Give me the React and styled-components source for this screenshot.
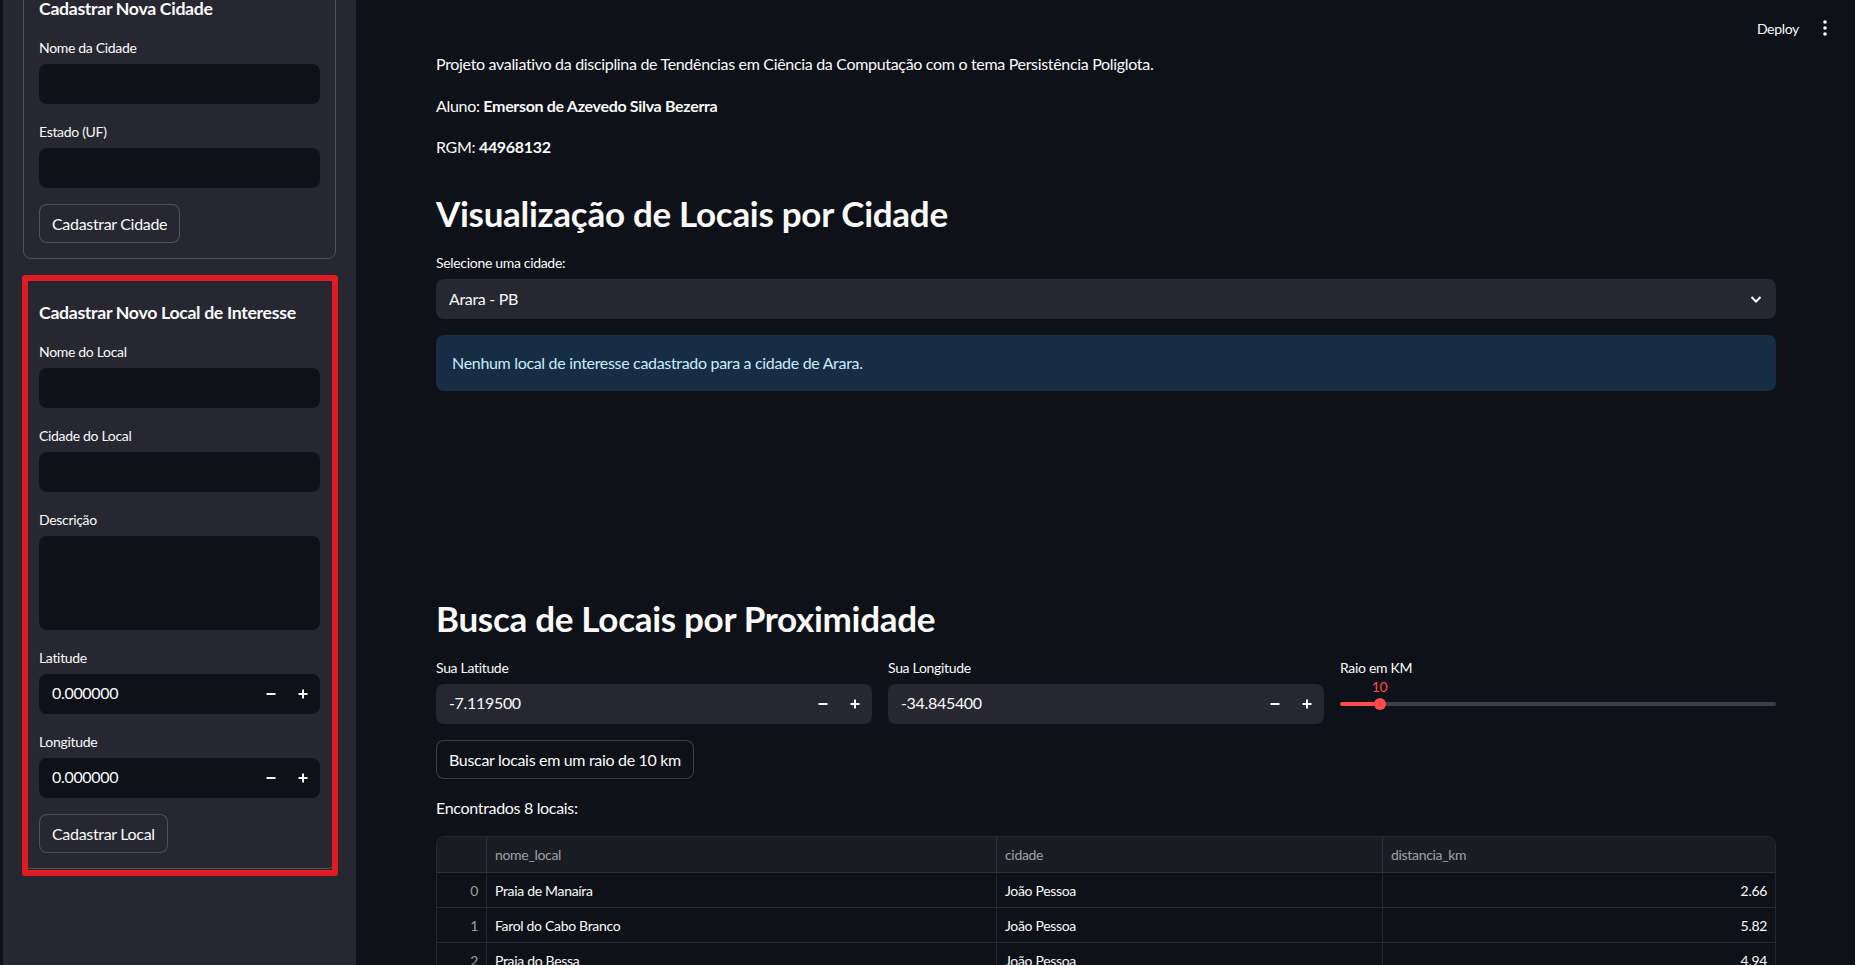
import React, { useLayoutEffect, useRef } from "react";
import styled, { createGlobalStyle } from "styled-components";

const GlobalStyle = createGlobalStyle`
  html, body {
    margin: 0;
    padding: 0;
    background: #0e1117;
    overflow: hidden;
  }
  body {
    font-family: Lato, "Noto Sans", sans-serif;
    color: #fafafa;
    letter-spacing: -0.02em;
  }
  * {
    box-sizing: border-box;
  }
`;

const Shell = styled.div`
  display: flex;
  height: 100vh;
  width: 100%;
`;

const Sidebar = styled.aside`
  width: 356px;
  flex-shrink: 0;
  height: 100%;
  overflow: hidden;
  background: #262730;
  border-left: 3px solid #0e1117;
  padding: 49px 20px 96px 20px;
  display: flex;
  flex-direction: column;
  gap: 16px;
`;

const CardWrap = styled.div`
  position: relative;
`;

const FormCard = styled.form`
  border: 1px solid rgba(250, 250, 250, 0.2);
  border-radius: 8px;
  padding: 15px;
  display: flex;
  flex-direction: column;
  gap: 16px;
`;

const Highlight = styled.div`
  position: absolute;
  top: 0;
  left: -1px;
  right: -2px;
  bottom: -7px;
  border: 6px solid #e01b24;
  border-radius: 3px;
  pointer-events: none;
`;

const CardTitle = styled.h3`
  margin: 0;
  padding-top: 11px;
  font-size: 17.7px;
  line-height: 22px;
  font-weight: 700;
  white-space: nowrap;
`;

const Field = styled.div`
  display: flex;
  flex-direction: column;
`;

const Label = styled.label`
  font-size: 14px;
  line-height: 24px;
  min-height: 24px;
  margin-bottom: 4px;
  color: #fafafa;
`;

const InputBox = styled.div`
  height: ${(p) => (p.$tall ? "94px" : "40px")};
  border-radius: 8px;
  background: ${(p) => (p.$main ? "#262730" : "#0e1117")};
  display: flex;
  align-items: center;
  padding-left: 13px;
  font-size: 16px;
  line-height: 20px;
  color: #fafafa;
`;

const InputValue = styled.span`
  flex: 1;
  padding-bottom: 2px;
`;

const StepButton = styled.button`
  width: 32px;
  height: 100%;
  border: none;
  background: transparent;
  display: flex;
  align-items: center;
  justify-content: center;
  padding: 0;
  color: #fafafa;
`;

const Steppers = styled.div`
  display: flex;
  height: 100%;
  padding-right: 1px;
`;

const Button = styled.button`
  align-self: flex-start;
  height: 39px;
  padding: 0 12px;
  border-radius: 8px;
  border: 1px solid rgba(250, 250, 250, 0.2);
  background: ${(p) => (p.$main ? "#0e1117" : "#262730")};
  color: #fafafa;
  font-family: inherit;
  font-size: 16px;
  letter-spacing: -0.02em;
`;

const Main = styled.main`
  flex: 1;
  position: relative;
  height: 100%;
  overflow: hidden;
`;

const Header = styled.header`
  position: absolute;
  top: 0;
  right: 0;
  height: 56px;
  display: flex;
  align-items: center;
  gap: 10px;
  padding-right: 14px;
`;

const DeployButton = styled.span`
  font-size: 14px;
  color: #fafafa;
`;

const MenuButton = styled.span`
  width: 32px;
  height: 32px;
  display: flex;
  align-items: center;
  justify-content: center;
`;

const Content = styled.div`
  padding: 51px 79px 0 80px;
  display: flex;
  flex-direction: column;
  gap: 16px;
`;

const Markdown = styled.div`
  p {
    margin: 0 0 16px 0;
    font-size: 16px;
    line-height: 25.6px;
  }
  p:last-child {
    margin-bottom: 0;
  }
  strong {
    font-weight: 700;
  }
`;

const Heading = styled.h2`
  margin: 0;
  padding-top: 16px;
  font-size: 35px;
  line-height: 43px;
  font-weight: 700;
  letter-spacing: -0.3px;
`;

const SelectBox = styled.div`
  height: 40px;
  border-radius: 8px;
  background: #262730;
  display: flex;
  align-items: center;
  justify-content: space-between;
  padding: 0 12px 0 13px;
  font-size: 16px;
`;

const InfoBox = styled.div`
  border-radius: 8px;
  background: #172d43;
  color: #c7ebff;
  padding: 16px;
  font-size: 16px;
  line-height: 24px;
`;

const MapArea = styled.div`
  height: 158px;
`;

const Columns = styled.div`
  display: grid;
  grid-template-columns: repeat(3, 1fr);
  gap: 16px;
`;

const SliderArea = styled.div`
  position: relative;
  height: 40px;
`;

const Track = styled.div`
  position: absolute;
  left: 0;
  right: 0;
  top: 18px;
  height: 4px;
  border-radius: 2px;
  background: #3b3d47;
`;

const TrackFill = styled.div`
  height: 100%;
  border-radius: 2px;
  background: #ff4b4b;
`;

const Thumb = styled.div`
  position: absolute;
  top: 14px;
  width: 12px;
  height: 12px;
  margin-left: -6px;
  border-radius: 50%;
  background: #ff4b4b;
`;

const ThumbValue = styled.div`
  position: absolute;
  top: -5px;
  transform: translateX(-50%);
  font-size: 14px;
  line-height: 16px;
  color: #ff4b4b;
`;

const Table = styled.div`
  border: 1px solid rgba(250, 250, 250, 0.1);
  border-radius: 8px;
  overflow: hidden;
  display: grid;
  grid-template-columns: 50px 510px 386px 1fr;
  font-size: 14px;
`;

const Cell = styled.div`
  height: ${(p) => (p.$head ? "36px" : "35px")};
  display: flex;
  align-items: center;
  justify-content: ${(p) => (p.$right ? "flex-end" : "flex-start")};
  padding: 0 8px;
  background: ${(p) => (p.$head ? "#1a1c24" : "#0e1117")};
  color: ${(p) => (p.$head || p.$dim ? "rgba(250, 250, 250, 0.6)" : "#fafafa")};
  border-right: 1px solid rgba(250, 250, 250, 0.1);
  border-bottom: 1px solid rgba(250, 250, 250, 0.1);
  &:nth-child(4n) {
    border-right: none;
  }
`;

const Minus = () => (
  <svg width="12" height="12" viewBox="0 0 12 12">
    <path d="M1.5 6h9" stroke="#fafafa" strokeWidth="2" />
  </svg>
);

const Plus = () => (
  <svg width="12" height="12" viewBox="0 0 12 12">
    <path d="M1.5 6h9M6 1.5v9" stroke="#fafafa" strokeWidth="2" />
  </svg>
);

const Chevron = () => (
  <svg width="16" height="16" viewBox="0 0 16 16">
    <path d="M3.5 6l4.5 4.5L12.5 6" fill="none" stroke="#fafafa" strokeWidth="2" />
  </svg>
);

const Kebab = () => (
  <svg width="6" height="16" viewBox="0 0 6 16">
    <circle cx="3" cy="2" r="1.8" fill="#fafafa" />
    <circle cx="3" cy="8" r="1.8" fill="#fafafa" />
    <circle cx="3" cy="14" r="1.8" fill="#fafafa" />
  </svg>
);

function TextField({ label, tall }) {
  return (
    <Field>
      <Label>{label}</Label>
      <InputBox $tall={tall} />
    </Field>
  );
}

function NumberField({ label, value, main }) {
  return (
    <Field>
      <Label>{label}</Label>
      <InputBox $main={main}>
        <InputValue>{value}</InputValue>
        <Steppers>
          <StepButton type="button"><Minus /></StepButton>
          <StepButton type="button"><Plus /></StepButton>
        </Steppers>
      </InputBox>
    </Field>
  );
}

const resultados = [
  { nome: "Praia de Manaíra", cidade: "João Pessoa", dist: "2.66" },
  { nome: "Farol do Cabo Branco", cidade: "João Pessoa", dist: "5.82" },
  { nome: "Praia do Bessa", cidade: "João Pessoa", dist: "4.94" },
];

export default function App() {
  const sidebarRef = useRef(null);
  const raio = 10;
  const pos = `${((raio - 1) / 99) * 100}%`;

  useLayoutEffect(() => {
    if (sidebarRef.current) sidebarRef.current.scrollTop = 81;
  }, []);

  return (
    <>
      <GlobalStyle />
      <Shell>
        <Sidebar ref={sidebarRef}>
          <FormCard>
            <CardTitle>Cadastrar Nova Cidade</CardTitle>
            <TextField label="Nome da Cidade" />
            <TextField label="Estado (UF)" />
            <Button type="button">Cadastrar Cidade</Button>
          </FormCard>
          <CardWrap>
            <FormCard>
              <CardTitle>Cadastrar Novo Local de Interesse</CardTitle>
              <TextField label="Nome do Local" />
              <TextField label="Cidade do Local" />
              <TextField label="Descrição" tall />
              <NumberField label="Latitude" value="0.000000" />
              <NumberField label="Longitude" value="0.000000" />
              <Button type="button">Cadastrar Local</Button>
            </FormCard>
            <Highlight />
          </CardWrap>
        </Sidebar>

        <Main>
          <Header>
            <DeployButton>Deploy</DeployButton>
            <MenuButton><Kebab /></MenuButton>
          </Header>
          <Content>
            <Markdown>
              <p>Projeto avaliativo da disciplina de Tendências em Ciência da Computação com o tema Persistência Poliglota.</p>
              <p>Aluno: <strong>Emerson de Azevedo Silva Bezerra</strong></p>
              <p>RGM: <strong>44968132</strong></p>
            </Markdown>

            <Heading>Visualização de Locais por Cidade</Heading>
            <Field>
              <Label>Selecione uma cidade:</Label>
              <SelectBox>
                <span>Arara - PB</span>
                <Chevron />
              </SelectBox>
            </Field>
            <InfoBox>Nenhum local de interesse cadastrado para a cidade de Arara.</InfoBox>
            <MapArea />

            <Heading>Busca de Locais por Proximidade</Heading>
            <Columns>
              <NumberField label="Sua Latitude" value="-7.119500" main />
              <NumberField label="Sua Longitude" value="-34.845400" main />
              <Field>
                <Label>Raio em KM</Label>
                <SliderArea>
                  <Track>
                    <TrackFill style={{ width: pos }} />
                  </Track>
                  <Thumb style={{ left: pos }} />
                  <ThumbValue style={{ left: pos }}>{raio}</ThumbValue>
                </SliderArea>
              </Field>
            </Columns>
            <Button type="button" $main>Buscar locais em um raio de {raio} km</Button>
            <Markdown>
              <p>Encontrados 8 locais:</p>
            </Markdown>
            <Table>
              <Cell $head />
              <Cell $head>nome_local</Cell>
              <Cell $head>cidade</Cell>
              <Cell $head>distancia_km</Cell>
              {resultados.map((r, i) => (
                <React.Fragment key={i}>
                  <Cell $right $dim>{i}</Cell>
                  <Cell>{r.nome}</Cell>
                  <Cell>{r.cidade}</Cell>
                  <Cell $right>{r.dist}</Cell>
                </React.Fragment>
              ))}
            </Table>
          </Content>
        </Main>
      </Shell>
    </>
  );
}
